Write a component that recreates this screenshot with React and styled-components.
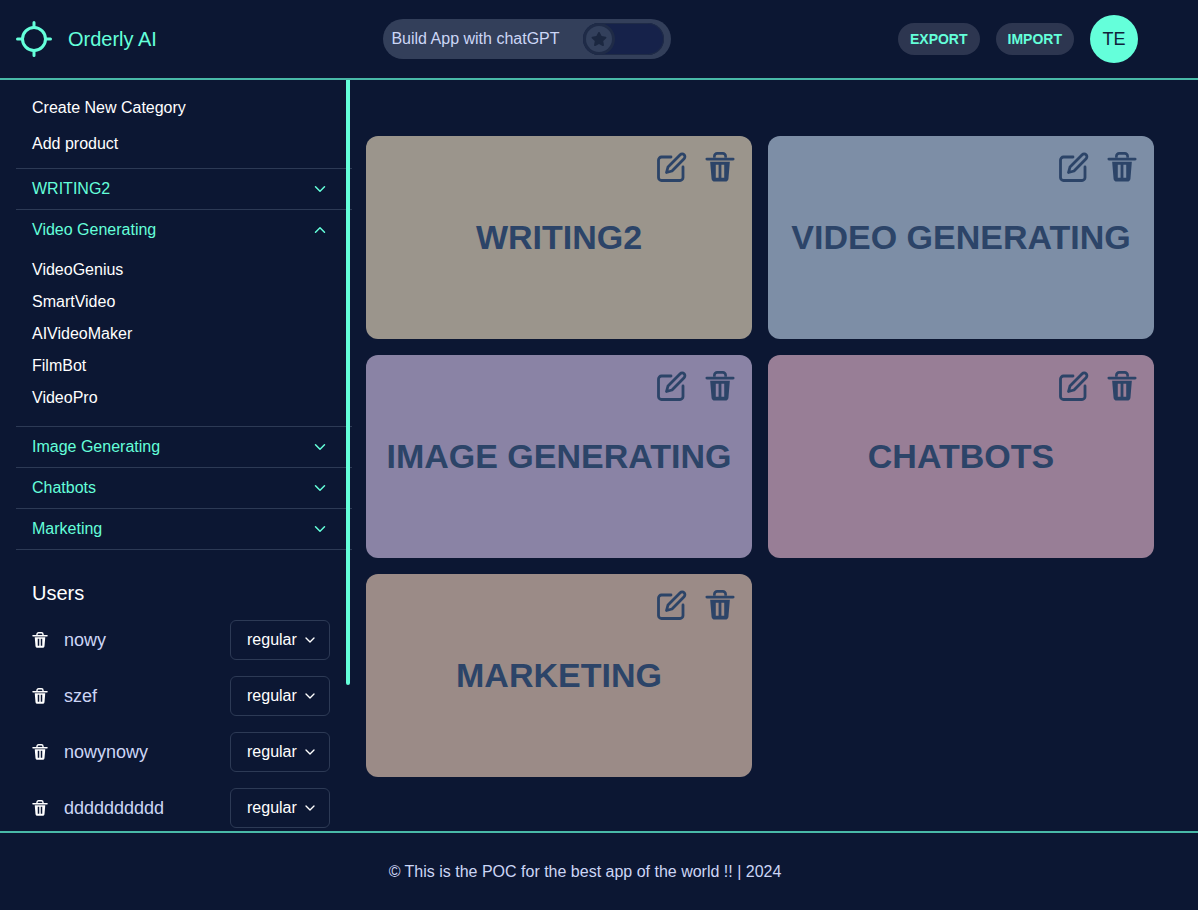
import React from 'react'
import styled, { createGlobalStyle } from 'styled-components'
import { ChevronDown, ChevronUp } from 'lucide-react'
import { FaStar } from 'react-icons/fa'

const accent = '#64ffda'
const navy = '#0c1733'
const slate = '#ccd6f6'
const ink = '#2c4468'

const categories = [
  { name: 'WRITING2', color: '#9b958c' },
  { name: 'Video Generating', color: '#7d8ea6', open: true, items: ['VideoGenius', 'SmartVideo', 'AIVideoMaker', 'FilmBot', 'VideoPro'] },
  { name: 'Image Generating', color: '#8a83a5' },
  { name: 'Chatbots', color: '#987e96' },
  { name: 'Marketing', color: '#9b8b87' },
]

const users = ['nowy', 'szef', 'nowynowy', 'dddddddddd']

const GlobalStyle = createGlobalStyle`
  * { box-sizing: border-box; }
  html, body { margin: 0; height: 100%; background: ${navy}; }
  body { font-family: "Liberation Sans", Arial, sans-serif; font-size: 16px; color: #fff; }
`

const Page = styled.div`
  height: 910px;
  display: grid;
  grid-template-rows: 80px 751px 79px;
  overflow: hidden;
`

const Header = styled.header`
  display: flex;
  align-items: center;
  justify-content: space-between;
  padding: 0 60px 0 16px;
  border-bottom: 2px solid rgba(100, 255, 218, 0.7);
`

const Brand = styled.div`
  display: flex;
  align-items: center;
  gap: 16px;
  font-size: 20px;
  color: ${accent};
`

const BuildPill = styled.div`
  width: 288px;
  height: 40px;
  padding: 0 7px 0 8px;
  display: flex;
  align-items: center;
  justify-content: space-between;
  border-radius: 20px;
  background: #333f5a;
  color: ${slate};
`

const Switch = styled.div`
  width: 81px;
  height: 32px;
  padding: 3px;
  border-radius: 16px;
  background: #16224a;
  box-shadow: inset 0 0 0 1px #1f2b47;
`

const Knob = styled.div`
  width: 26px;
  height: 26px;
  display: flex;
  align-items: center;
  justify-content: center;
  border-radius: 50%;
  background: #33405c;
  box-shadow: 0 0 0 3px #1f2b47;
  color: #1b2740;
`

const Actions = styled.div`
  display: flex;
  align-items: center;
  gap: 16px;
`

const PillButton = styled.button`
  height: 32px;
  padding: 0 12px;
  border: 0;
  border-radius: 16px;
  background: #2d3650;
  color: ${accent};
  font: bold 14px "Liberation Sans", Arial, sans-serif;
`

const Avatar = styled.div`
  width: 48px;
  height: 48px;
  display: flex;
  align-items: center;
  justify-content: center;
  border-radius: 50%;
  background: ${accent};
  color: #10223a;
  font-size: 18px;
`

const Body = styled.div`
  display: grid;
  grid-template-columns: 352px 1fr;
  min-height: 0;
`

const Sidebar = styled.aside`
  position: relative;
  overflow: hidden;
  padding-left: 16px;
`

const ScrollThumb = styled.div`
  position: absolute;
  top: 0;
  right: 2px;
  width: 4px;
  height: 605px;
  border-radius: 0 0 2px 2px;
  background: ${accent};
`

const ActionList = styled.div`
  display: flex;
  flex-direction: column;
  padding: 10px 0 6px 16px;
`

const ActionLink = styled.a`
  height: 36px;
  display: flex;
  align-items: center;
  color: #fff;
`

const Section = styled.div`
  border-top: 1px solid #2d3a55;
  &:last-child { border-bottom: 1px solid #2d3a55; }
`

const SectionHead = styled.div`
  height: 40px;
  padding: 0 23px 0 16px;
  display: flex;
  align-items: center;
  justify-content: space-between;
  color: ${accent};
`

const SectionItems = styled.div`
  display: flex;
  flex-direction: column;
  padding: 4px 0 12px 16px;
`

const SectionItem = styled.div`
  height: 32px;
  display: flex;
  align-items: center;
  color: #fff;
`

const UsersBlock = styled.div`
  padding: 29px 22px 0 16px;
`

const UsersTitle = styled.h2`
  margin: 0 0 5px;
  font-size: 20px;
  font-weight: 400;
  line-height: 28px;
  color: #fff;
`

const UserRow = styled.div`
  height: 56px;
  display: flex;
  align-items: center;
  gap: 16px;
`

const UserName = styled.span`
  flex: 1;
  font-size: 18px;
  color: ${slate};
`

const RoleSelect = styled.div`
  width: 100px;
  height: 40px;
  padding: 0 11px 0 16px;
  display: flex;
  align-items: center;
  justify-content: space-between;
  border: 1px solid #2d3a55;
  border-radius: 6px;
  color: #fff;
`

const Main = styled.main`
  padding: 56px 0 0 14px;
`

const CardGrid = styled.div`
  display: grid;
  grid-template-columns: repeat(2, 386px);
  grid-auto-rows: 203px;
  gap: 16px;
`

const Card = styled.article`
  position: relative;
  display: flex;
  align-items: center;
  justify-content: center;
  border-radius: 12px;
  background: ${(p) => p.$color};
  color: ${ink};
`

const CardTitle = styled.h3`
  margin: 0;
  font-size: 34px;
  font-weight: 700;
  text-transform: uppercase;
`

const CardTools = styled.div`
  position: absolute;
  top: 16px;
  right: 17px;
  display: flex;
  align-items: center;
  gap: 18px;
`

const Footer = styled.footer`
  display: flex;
  align-items: center;
  justify-content: center;
  padding: 0 28px 0 0;
  border-top: 2px solid rgba(100, 255, 218, 0.7);
  color: ${slate};
`

const LogoIcon = () => (
  <svg width="36" height="36" viewBox="0 0 36 36" fill="none" stroke={accent} strokeLinecap="round">
    <circle cx="18" cy="18" r="11.5" strokeWidth="3" />
    <path d="M18 1.5v5M18 29.500v5M1.500 18h5M29.500 18h5" strokeWidth="3" />
  </svg>
)

const EditIcon = () => (
  <svg width="30" height="30" viewBox="0 0 30 30" fill="none" stroke="currentColor" strokeWidth="2.8" strokeLinecap="round" strokeLinejoin="round">
    <path d="M14 5H4.500a3 3 0 0 0-3 3v17.500a3 3 0 0 0 3 3H23a3 3 0 0 0 3-3V15" />
    <path d="M9.500 20.500l1.500-5.500L23.200 2.800a2.700 2.700 0 0 1 3.900 3.900L15 19z" />
  </svg>
)

const TrashIcon = ({ size = 30 }) => (
  <svg width={size} height={size} viewBox="0 0 30 32" fill="currentColor">
    <path d="M9 6V4.500A3 3 0 0 1 12 1.500h6a3 3 0 0 1 3 3V6" fill="none" stroke="currentColor" strokeWidth="2.800" />
    <path d="M1 7.500h28" fill="none" stroke="currentColor" strokeWidth="3" strokeLinecap="round" />
    <path
      fillRule="evenodd"
      d="M4.500 10.500h21l-1.500 18a3.500 3.500 0 0 1-3.500 3h-11a3.500 3.500 0 0 1-3.500-3zM10.500 13.500v14h3v-14zM16.500 13.500v14h3v-14z"
    />
  </svg>
)

const App = () => (
  <Page>
    <GlobalStyle />
    <Header>
      <Brand>
        <LogoIcon />
        Orderly AI
      </Brand>
      <BuildPill>
        Build App with chatGPT
        <Switch>
          <Knob>
            <FaStar size={16} />
          </Knob>
        </Switch>
      </BuildPill>
      <Actions>
        <PillButton>EXPORT</PillButton>
        <PillButton>IMPORT</PillButton>
        <Avatar>TE</Avatar>
      </Actions>
    </Header>

    <Body>
      <Sidebar>
        <ActionList>
          <ActionLink>Create New Category</ActionLink>
          <ActionLink>Add product</ActionLink>
        </ActionList>
        <div>
          {categories.map((c) => (
            <Section key={c.name}>
              <SectionHead>
                {c.name}
                {c.open ? <ChevronUp size={18} strokeWidth={2} /> : <ChevronDown size={18} strokeWidth={2} />}
              </SectionHead>
              {c.items && (
                <SectionItems>
                  {c.items.map((i) => (
                    <SectionItem key={i}>{i}</SectionItem>
                  ))}
                </SectionItems>
              )}
            </Section>
          ))}
        </div>
        <UsersBlock>
          <UsersTitle>Users</UsersTitle>
          {users.map((u) => (
            <UserRow key={u}>
              <TrashIcon size={16} />
              <UserName>{u}</UserName>
              <RoleSelect>
                regular
                <ChevronDown size={16} strokeWidth={2} />
              </RoleSelect>
            </UserRow>
          ))}
        </UsersBlock>
        <ScrollThumb />
      </Sidebar>

      <Main>
        <CardGrid>
          {categories.map((c) => (
            <Card key={c.name} $color={c.color}>
              <CardTitle>{c.name}</CardTitle>
              <CardTools>
                <EditIcon />
                <TrashIcon />
              </CardTools>
            </Card>
          ))}
        </CardGrid>
      </Main>
    </Body>

    <Footer>© This is the POC for the best app of the world !! | 2024</Footer>
  </Page>
)

export default App
